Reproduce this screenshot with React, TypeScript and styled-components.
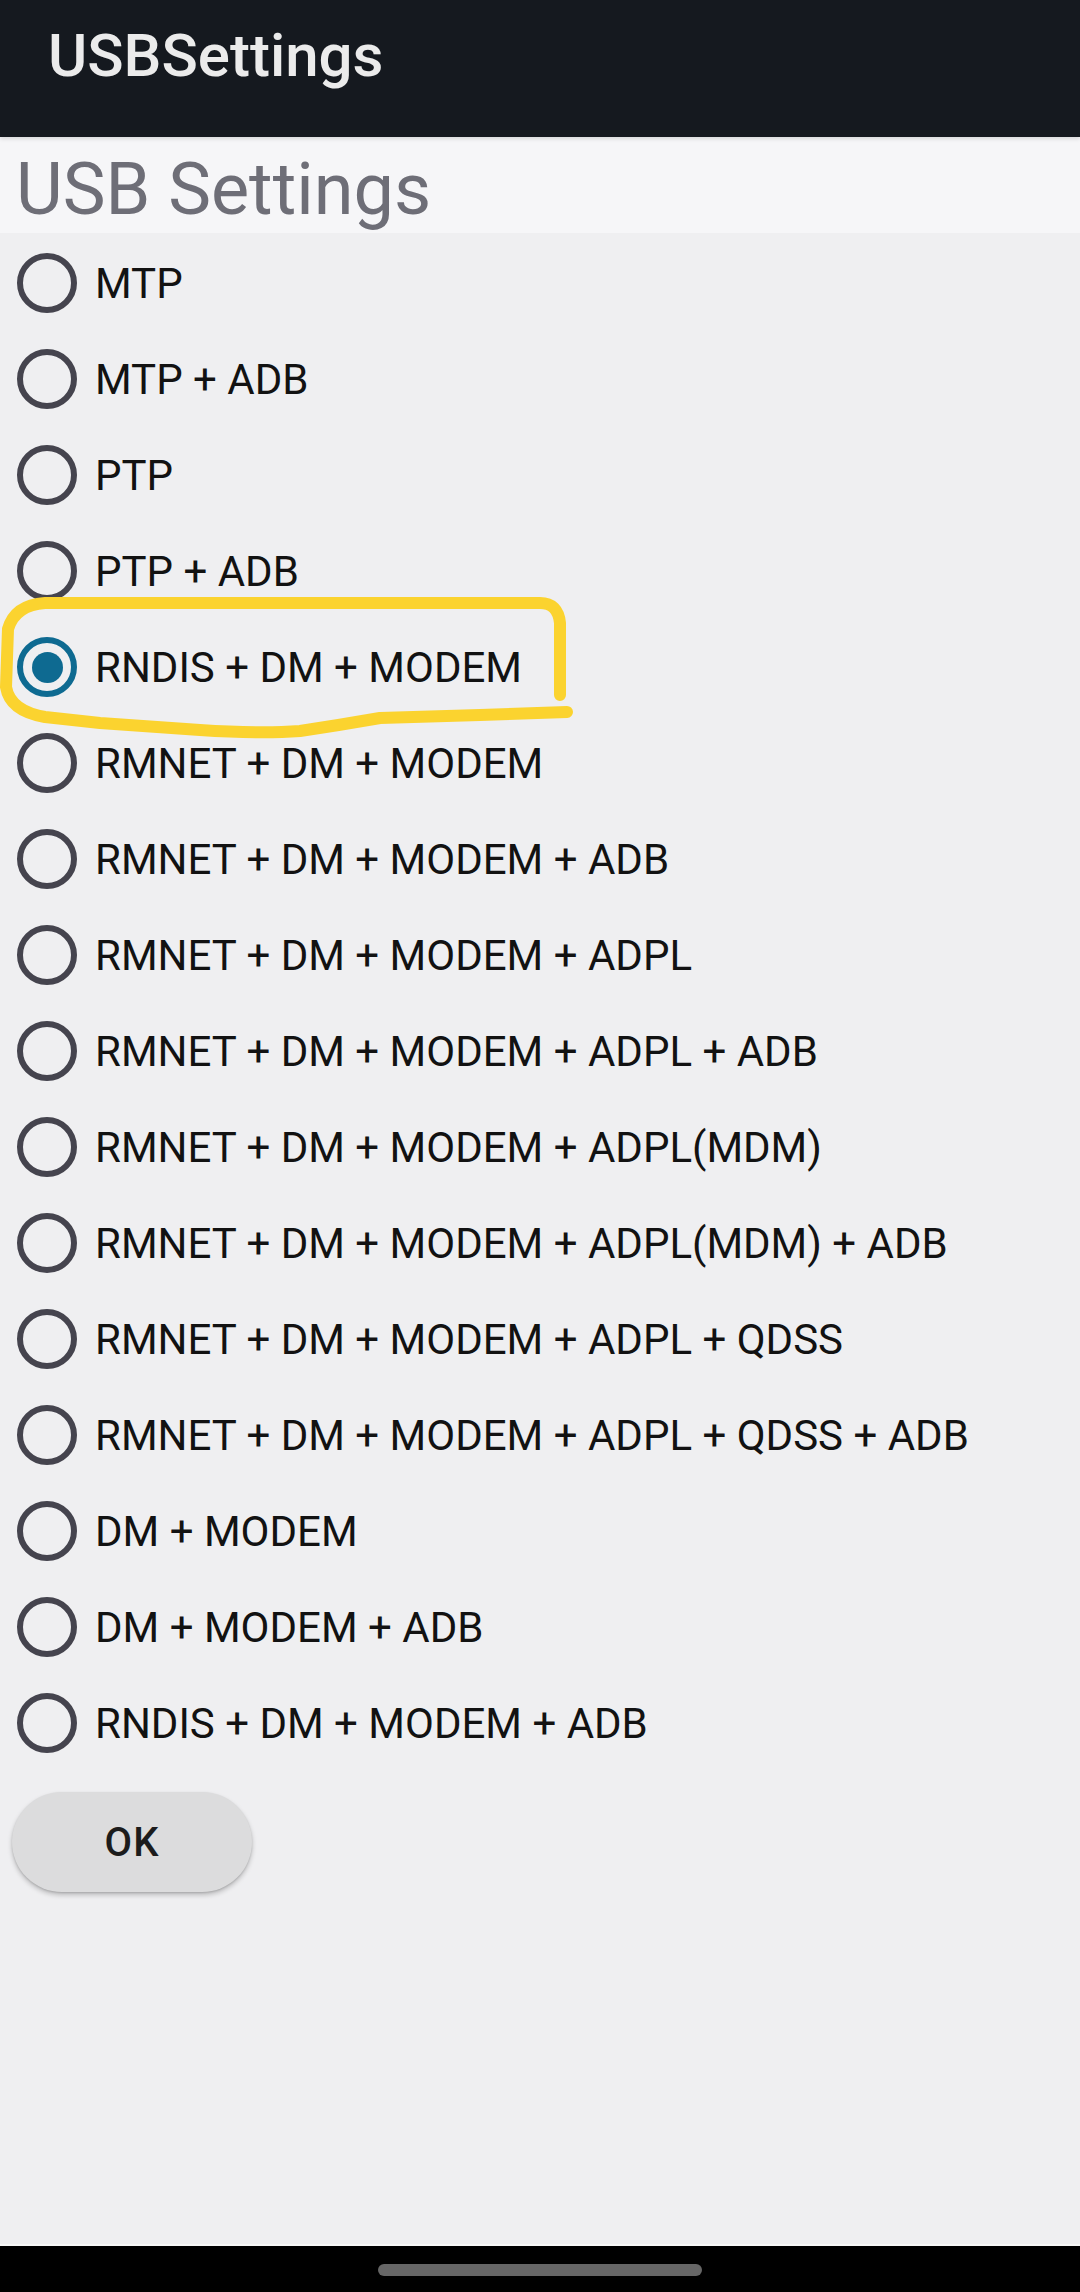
import React from "react";
import styled, { createGlobalStyle } from "styled-components";

const Global = createGlobalStyle`
  html, body { margin: 0; padding: 0; }
  body { background: #efeff1; font-family: Roboto, "Noto Sans", Arial, sans-serif; }
  * { box-sizing: border-box; }
`;

const Page = styled.div`
  display: flex;
  flex-direction: column;
  min-height: 2292px;
  width: 1080px;
  background: #efeff1;
`;

const AppBar = styled.header`
  height: 137px;
  background: #15191f;
  padding: 26px 0 0 48px;
  box-shadow: 0 2px 4px rgba(0, 0, 0, 0.12);
  position: relative;
  z-index: 1;
`;

const AppTitle = styled.h1`
  margin: 0;
  font-family: Roboto, sans-serif;
  font-weight: 500;
  font-size: 60px;
  line-height: 1;
  color: #ebebeb;
  letter-spacing: 0;
`;

const Header = styled.div`
  height: 96px;
  background: #f6f6f8;
  padding: 17px 0 0 16px;
`;

const HeaderText = styled.h2`
  margin: 0;
  font-family: Roboto, sans-serif;
  font-weight: 400;
  font-size: 72px;
  line-height: 1;
  color: #6e6e77;
`;

const Content = styled.main`
  flex: 1;
  display: flex;
  flex-direction: column;
  align-items: flex-start;
  padding-top: 2px;
`;

const List = styled.div`
  display: flex;
  flex-direction: column;
  width: 100%;
`;

const Row = styled.label`
  position: relative;
  height: 96px;
  display: flex;
  align-items: center;
  gap: 18px;
  padding-left: 17px;
  cursor: pointer;
`;

const Radio = styled.span<{ $checked: boolean }>`
  width: 60px;
  height: 60px;
  border-radius: 50%;
  border: 6px solid ${(p) => (p.$checked ? "#0e6a91" : "#45444e")};
  display: flex;
  align-items: center;
  justify-content: center;
  flex-shrink: 0;
  &::after {
    content: "";
    display: ${(p) => (p.$checked ? "block" : "none")};
    width: 31px;
    height: 31px;
    border-radius: 50%;
    background: #0e6a91;
  }
`;

const RowText = styled.span`
  font-family: Roboto, sans-serif;
  font-size: 42px;
  font-weight: 400;
  color: #121212;
  white-space: nowrap;
`;

const Highlight = styled.svg`
  position: absolute;
  left: 0;
  top: 0;
  width: 580px;
  height: 96px;
  overflow: visible;
  pointer-events: none;
`;

const OkButton = styled.button`
  margin: 21px 0 0 12px;
  width: 240px;
  height: 100px;
  border: none;
  border-radius: 50px;
  background: #dcdcdd;
  box-shadow: 0 3px 5px rgba(0, 0, 0, 0.22), 0 1px 2px rgba(0, 0, 0, 0.12);
  font-family: Roboto, sans-serif;
  font-weight: 500;
  font-size: 40px;
  letter-spacing: 1px;
  color: #1c1c1c;
  padding: 0;
`;

const NavBar = styled.div`
  height: 48px;
  background: #000;
  border-top: 2px solid #f8f8f8;
  display: flex;
  align-items: center;
  justify-content: center;
`;

const Handle = styled.div`
  width: 324px;
  height: 12px;
  border-radius: 6px;
  background: #666666;
  margin-top: 2px;
`;

const options = [
  "MTP",
  "MTP + ADB",
  "PTP",
  "PTP + ADB",
  "RNDIS + DM + MODEM",
  "RMNET + DM + MODEM",
  "RMNET + DM + MODEM + ADB",
  "RMNET + DM + MODEM + ADPL",
  "RMNET + DM + MODEM + ADPL + ADB",
  "RMNET + DM + MODEM + ADPL(MDM)",
  "RMNET + DM + MODEM + ADPL(MDM) + ADB",
  "RMNET + DM + MODEM + ADPL + QDSS",
  "RMNET + DM + MODEM + ADPL + QDSS + ADB",
  "DM + MODEM",
  "DM + MODEM + ADB",
  "RNDIS + DM + MODEM + ADB",
];

export default function App() {
  const [selected, setSelected] = React.useState(4);
  return (
    <Page>
      <Global />
      <AppBar>
        <AppTitle>USBSettings</AppTitle>
      </AppBar>
      <Header>
        <HeaderText>USB Settings</HeaderText>
      </Header>
      <Content>
        <List>
          {options.map((o, i) => (
            <Row key={o} onClick={() => setSelected(i)}>
              <Radio $checked={i === selected} />
              <RowText>{o}</RowText>
              {i === 4 && (
                <Highlight viewBox="0 0 580 96">
                  <path
                    d="M 560 76 L 560 4 Q 558 -16 540 -16 L 45 -16 Q 15 -14 8 10 L 6 68 Q 10 92 45 98 L 100 104 L 200 111 Q 260 115 300 112 Q 340 106 380 99 L 480 96 L 567 93"
                    fill="none"
                    stroke="#fbd32f"
                    strokeWidth={12}
                    strokeLinecap="round"
                    strokeLinejoin="round"
                  />
                </Highlight>
              )}
            </Row>
          ))}
        </List>
        <OkButton>OK</OkButton>
      </Content>
      <NavBar>
        <Handle />
      </NavBar>
    </Page>
  );
}
